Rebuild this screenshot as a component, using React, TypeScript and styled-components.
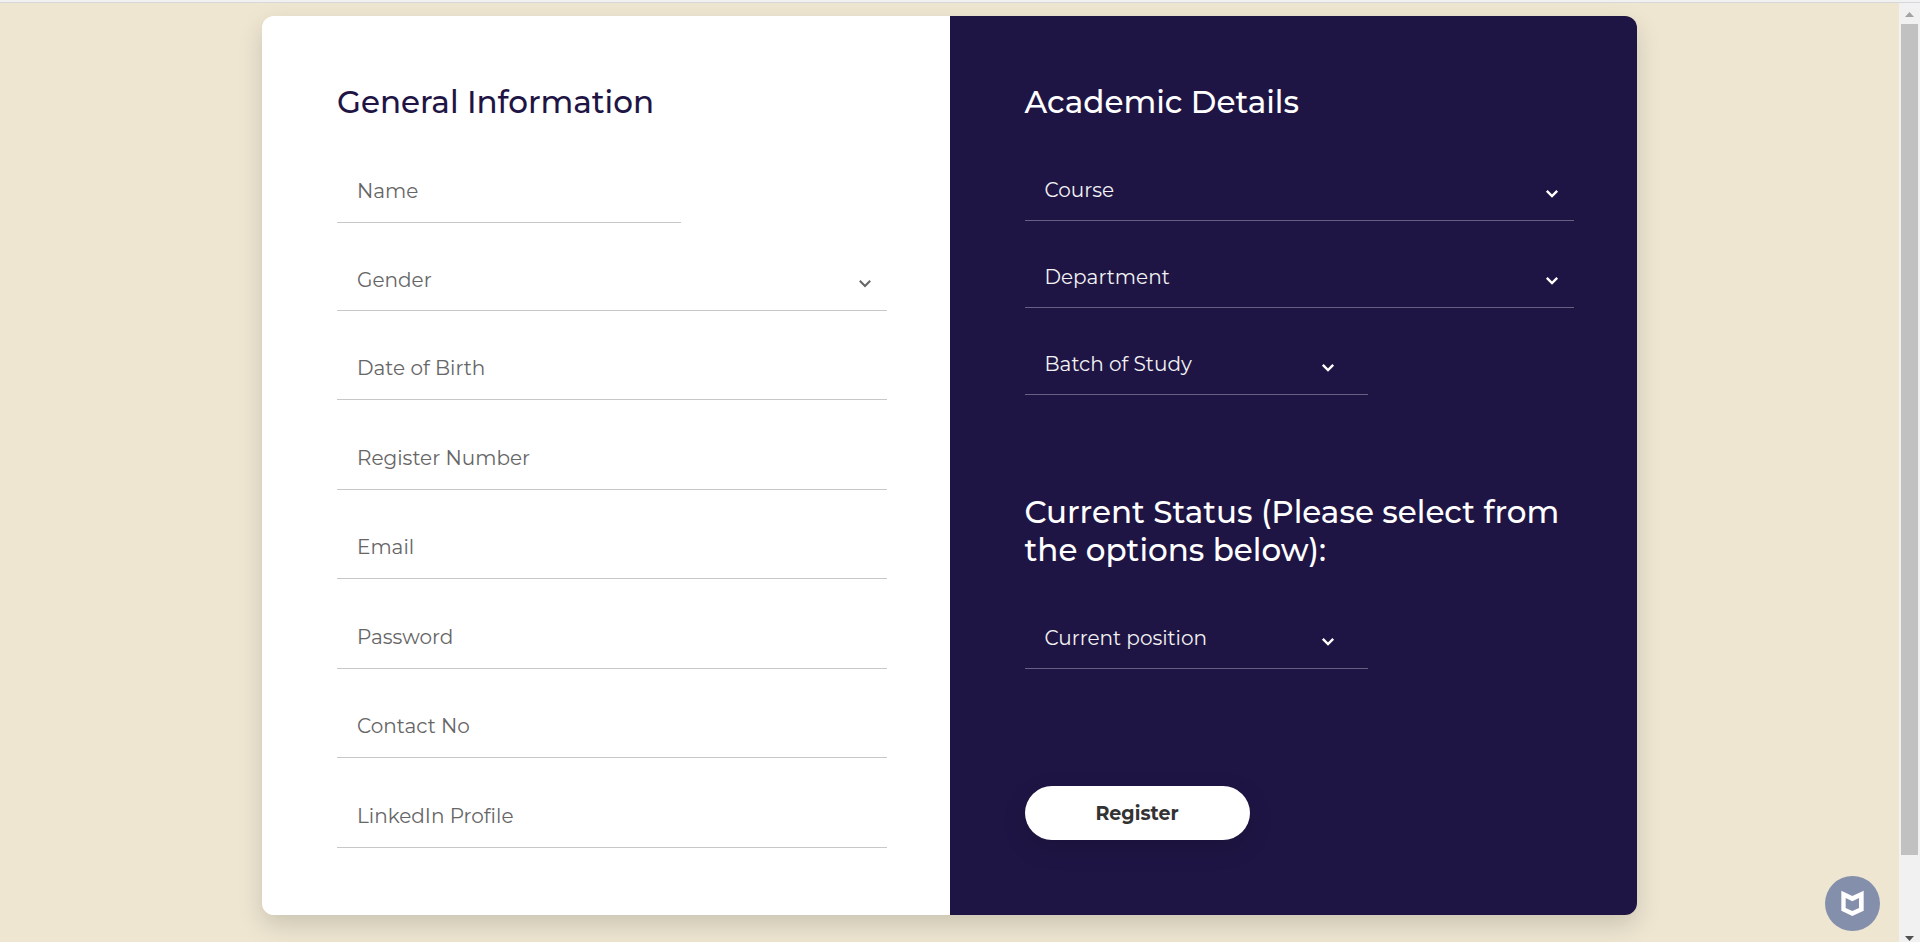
import React from "react";
import styled, { createGlobalStyle } from "styled-components";

const GlobalStyle = createGlobalStyle`
  *, *::before, *::after { box-sizing: border-box; }
  html { overflow: hidden; }
  body {
    margin: 0;
    background: #eee6d1;
    font-family: Montserrat, Inter, "Liberation Sans", sans-serif;
  }
`;

const Page = styled.div`
  display: flex;
  flex-direction: column;
  min-height: 100vh;
`;

const TopEdge = styled.div`
  height: 3px;
  background: #f1f1f1;
  border-bottom: 1px solid #d5d7da;
`;

const Body = styled.div`
  flex: 1;
  display: flex;
`;

const Main = styled.main`
  flex: 1;
  min-width: 0;
  padding: 13px 16px 27px;
`;

const Card = styled.form`
  display: flex;
  max-width: 1375px;
  margin: 0 auto;
  border-radius: 12px;
  box-shadow: 0 10px 25px rgba(0, 0, 0, 0.15);
`;

const Panel = styled.section<{ $dark?: boolean }>`
  flex: 1 1 0;
  min-width: 0;
  display: flex;
  flex-direction: column;
  padding: 67px 63px ${(p) => (p.$dark ? "75px" : "67px")} 75px;
  border-radius: ${(p) => (p.$dark ? "0 12px 12px 0" : "12px 0 0 12px")};
  background: ${(p) => (p.$dark ? "#1f1545" : "#fff")};
  color: ${(p) => (p.$dark ? "#fff" : "#1f1545")};
`;

const Heading = styled.h2`
  margin: 0;
  font-size: 31px;
  line-height: 38px;
  font-weight: 500;
`;

const Fields = styled.div<{ $fill?: boolean }>`
  display: flex;
  flex-direction: column;
  gap: 35px;
  margin-top: 48px;
  ${(p) => p.$fill && "flex: 1; gap: 0; justify-content: space-between;"}
`;

const control = `
  width: 100%;
  margin: 0;
  border: 0;
  border-radius: 0;
  outline: none;
  background: transparent;
  font-family: inherit;
  font-size: 20px;
  line-height: 26px;
  font-weight: 400;
`;

const TextInput = styled.input<{ $half?: boolean }>`
  ${control}
  max-width: ${(p) => (p.$half ? "344px" : "none")};
  height: 54px;
  padding: 0 20px 9px;
  border-bottom: 1px solid #c8c8c8;
  color: #666;
  &::placeholder { color: #666; opacity: 1; }
`;

const SelectWrap = styled.div<{ $half?: boolean; $dark?: boolean }>`
  position: relative;
  max-width: ${(p) => (p.$half ? "343px" : "none")};
  color: ${(p) => (p.$dark ? "#fff" : "#666")};
  svg {
    position: absolute;
    top: 20px;
    right: ${(p) => (p.$half ? "33px" : "15px")};
    pointer-events: none;
  }
`;

const Select = styled.select<{ $dark?: boolean }>`
  ${control}
  display: block;
  appearance: none;
  height: 52px;
  padding: 0 20px 9px;
  border-bottom: 1px solid ${(p) => (p.$dark ? "#685f83" : "#c8c8c8")};
  color: ${(p) => (p.$dark ? "#f2f2f2" : "#666")};
`;

const RegisterButton = styled.button`
  align-self: flex-start;
  width: 225px;
  height: 54px;
  margin-top: 117px;
  padding: 2px 0 0;
  border: 0;
  border-radius: 27px;
  background: #fff;
  box-shadow: 0 8px 25px rgba(0, 0, 0, 0.15);
  color: #333;
  font-family: inherit;
  font-size: 19px;
  line-height: 24px;
  font-weight: 700;
  cursor: pointer;
`;

const StatusHeading = styled(Heading)`
  margin-top: 98px;
`;

const ScrollTrack = styled.div`
  display: flex;
  flex-direction: column;
  align-items: center;
  width: 21px;
  padding: 9px 0 1px;
  background: #f1f1f1;
`;

const ScrollThumb = styled.div`
  flex: 1;
  width: 17px;
  margin: 7px 0 81px;
  background: #c1c1c1;
`;

const ShieldBadge = styled.button`
  position: fixed;
  right: 40px;
  bottom: 11px;
  width: 55px;
  height: 55px;
  padding: 0;
  border: 0;
  border-radius: 50%;
  background: #8490ab;
  svg { display: block; }
`;

function DropDown({ label, half, dark }: { label: string; half?: boolean; dark?: boolean }) {
  return (
    <SelectWrap $half={half} $dark={dark}>
      <Select aria-label={label} $dark={dark}>
        <option>{label}</option>
      </Select>
      <svg width="14" height="10" viewBox="0 0 14 10" fill="none" stroke="currentColor" strokeWidth={dark ? 2.4 : 2}>
        <path d="M1.8 1.8 7 7l5.2-5.2" />
      </svg>
    </SelectWrap>
  );
}

const Entry = ({ label, type = "text", half }: { label: string; type?: string; half?: boolean }) => (
  <TextInput type={type} placeholder={label} aria-label={label} $half={half} />
);

export default function App() {
  return (
    <Page>
      <GlobalStyle />
      <TopEdge />
      <Body>
        <Main>
          <Card onSubmit={(e) => e.preventDefault()}>
            <Panel>
              <Heading>General Information</Heading>
              <Fields $fill>
                <Entry label="Name" half />
                <DropDown label="Gender" />
                <Entry label="Date of Birth" />
                <Entry label="Register Number" />
                <Entry label="Email" type="email" />
                <Entry label="Password" type="password" />
                <Entry label="Contact No" type="tel" />
                <Entry label="LinkedIn Profile" />
              </Fields>
            </Panel>
            <Panel $dark>
              <Heading>Academic Details</Heading>
              <Fields>
                <DropDown label="Course" dark />
                <DropDown label="Department" dark />
                <DropDown label="Batch of Study" dark half />
              </Fields>
              <StatusHeading>
                Current Status (Please select from the options below):
              </StatusHeading>
              <Fields>
                <DropDown label="Current position" dark half />
              </Fields>
              <RegisterButton type="submit">Register</RegisterButton>
            </Panel>
          </Card>
        </Main>
        <ScrollTrack aria-hidden="true">
          <svg width="9" height="5" viewBox="0 0 9 5"><path d="M0 5 4.5 0 9 5z" fill="#a3a3a3" /></svg>
          <ScrollThumb />
          <svg width="9" height="5" viewBox="0 0 9 5"><path d="M0 0 4.5 5 9 0z" fill="#505050" /></svg>
        </ScrollTrack>
      </Body>
      <ShieldBadge type="button" aria-label="Site protection">
        <svg width="55" height="55" viewBox="0 0 165 165">
          <path
            fill="#fff"
            fillRule="evenodd"
            d="M49 44 82 60l34-16v60l-34 16-33-16zM62 66v30l20 9 20-9V66L82 76z"
          />
        </svg>
      </ShieldBadge>
    </Page>
  );
}
